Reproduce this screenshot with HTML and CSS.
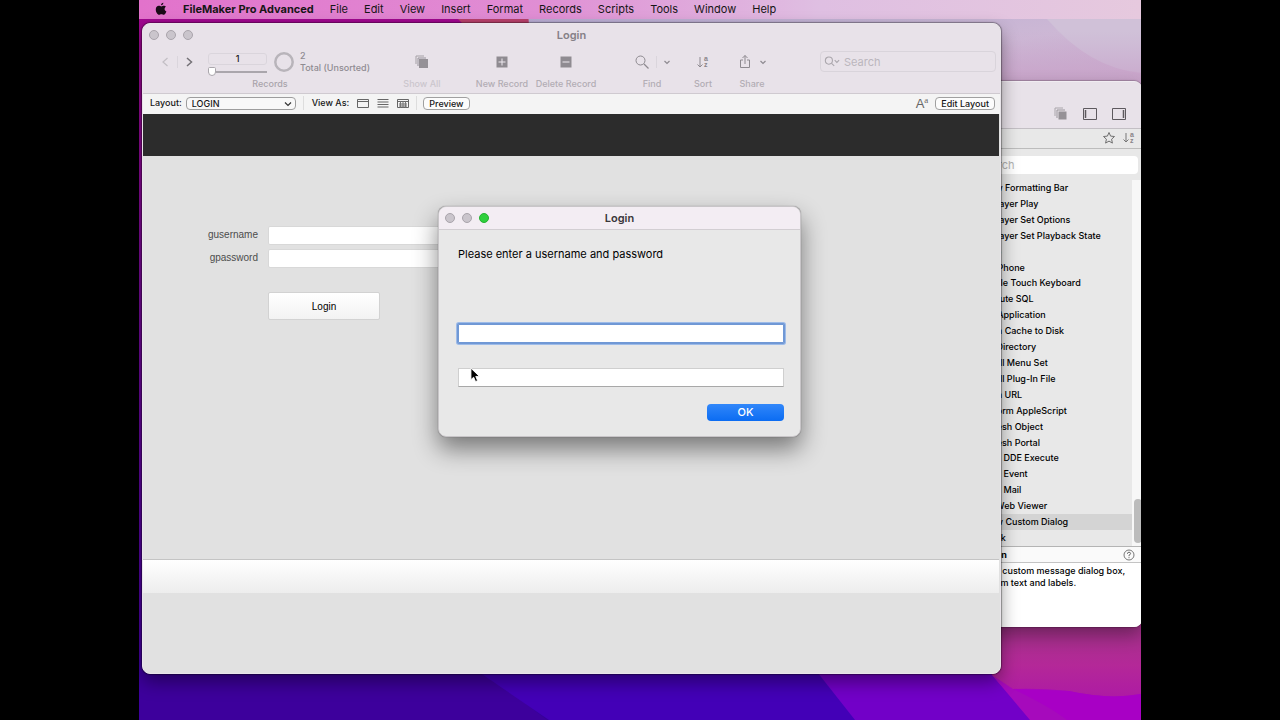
FILE: index.html
```html
<!DOCTYPE html>
<html lang="en">
<head>
<meta charset="utf-8">
<title>Login</title>
<link rel="stylesheet" href="styles.css">
</head>
<body>
<div class="desktop">
  <svg class="wallpaper" viewBox="0 0 1002 720" preserveAspectRatio="none" aria-hidden="true">
    <defs>
      <linearGradient id="left" x1="0" y1="0" x2="0" y2="1">
        <stop offset="0" stop-color="#a3078f"/><stop offset=".4" stop-color="#720a91"/><stop offset="1" stop-color="#3d009f"/>
      </linearGradient>
      <linearGradient id="sky" x1="0" y1="0" x2="1" y2="1">
        <stop offset="0" stop-color="#b3a9d2"/><stop offset=".6" stop-color="#cdb8d5"/><stop offset="1" stop-color="#c9a0c6"/>
      </linearGradient>
      <linearGradient id="rose" x1="0" y1="0" x2="0" y2="1">
        <stop offset="0" stop-color="#9f3486"/><stop offset=".45" stop-color="#b42898"/><stop offset="1" stop-color="#a911ac"/>
      </linearGradient>
      <linearGradient id="haze" x1="0" y1="0" x2="0" y2="1">
        <stop offset="0" stop-color="#c9acd0" stop-opacity="0"/><stop offset="1" stop-color="#c8a2c8"/>
      </linearGradient>
    </defs>
    <rect width="1002" height="720" fill="url(#left)"/>
    <path d="M300 0H390L396 30H330Z" fill="#b8406b"/>
    <path d="M388 0H1002V100H396Z" fill="url(#sky)"/>
    <path d="M908 19H1002V73Q950 68 908 19Z" fill="#d0c1d8"/>
    <path d="M862 30H1002V90H862Z" fill="url(#haze)"/>
    <rect x="250" y="660" width="250" height="60" fill="#36009a"/>
    <path d="M0 660H330L408 720H0Z" fill="#3d009c"/>
    <path d="M334 668L410 720H760L680 660Z" fill="#4300b7"/>
    <path d="M675 668L716 720H900L850 660Z" fill="#7200c8"/>
    <path d="M850 620H1002V720H894L853 675Z" fill="url(#rose)"/>
    <path d="M853 675L891 720H1002V694Q970 700 930 691Q900 688 874 689Z" fill="#a60abc"/>
    <path d="M874 689Q910 706 928 720H1002V694Q970 700 930 691Z" fill="#a800c5"/>
  </svg>

  <nav class="menubar" aria-label="Application menu">
    <svg class="apple" viewBox="0 0 14 16"><path d="M9.8.7C9.9 2 8.700 3.600 7.100 3.600 6.900 2.200 8.300.8 9.800.7ZM12.700 5.400c-2.300 1.500-1.800 4.500.6 5.500-.6 1.700-1.800 3.800-3.100 3.800-1.100 0-1.400-.7-2.700-.7s-1.700.7-2.700.7C2.800 14.700.9 11.400.9 8.500.9 5.700 2.600 4.200 4.400 4.200c1.200 0 2.200.8 3 .8.700 0 1.900-.9 3.300-.8.800 0 1.600.4 2 1.200Z"/></svg>
    <strong class="app-name">FileMaker Pro Advanced</strong>
    <button class="menu">File</button><button class="menu">Edit</button><button class="menu">View</button><button class="menu">Insert</button><button class="menu">Format</button><button class="menu">Records</button><button class="menu">Scripts</button><button class="menu">Tools</button><button class="menu">Window</button><button class="menu">Help</button>
  </nav>

  <section class="window script-window" aria-label="Script steps">
    <div class="script-tools">
      <svg class="icon" viewBox="0 0 16 16"><path d="M2 10V2H10" fill="none" stroke="#aaa6ab"/><path d="M4 12V4H12" fill="none" stroke="#99959a"/><path d="M5.500 5.500h8v8h-8z" fill="#969297"/></svg>
      <svg class="icon" viewBox="0 0 16 16"><path d="M1.500 2.500h13v11h-13z" fill="none" stroke="#5d595e"/><path d="M3.500 4v8" stroke="#5d595e" stroke-width="1.500"/></svg>
      <svg class="icon" viewBox="0 0 16 16"><path d="M1.500 2.500h13v11h-13z" fill="none" stroke="#5d595e"/><path d="M12.500 4v8" stroke="#5d595e" stroke-width="1.500"/></svg>
    </div>
    <div class="step-sort">
      <svg class="small-icon" viewBox="0 0 14 14"><path d="M7 1.500l1.600 3.600 3.900.4-2.900 2.700.8 3.900L7 10.100l-3.400 2 .8-3.900L1.500 5.500l3.900-.4Z" fill="none" stroke="#6e6e6e"/></svg>
      <svg class="small-icon sort-letters" viewBox="0 0 14 14"><path d="M4 2v9M1.500 8.500L4 11l2.500-2.500" fill="none" stroke="#777"/><text x="8" y="6">a</text><text x="8" y="12">z</text></svg>
    </div>
    <div class="step-search"><input type="search" placeholder="Search" aria-label="Search steps"></div>
    <div class="step-area">
      <ul class="steps">
        <li>Allow Formatting Bar</li><li>AVPlayer Play</li><li>AVPlayer Set Options</li><li>AVPlayer Set Playback State</li><li>Beep</li><li>Dial Phone</li><li>Enable Touch Keyboard</li><li>Execute SQL</li><li>Exit Application</li><li>Flush Cache to Disk</li><li>Get Directory</li><li>Install Menu Set</li><li>Install Plug-In File</li><li>Open URL</li><li>Perform AppleScript</li><li>Refresh Object</li><li>Refresh Portal</li><li>Send DDE Execute</li><li>Send Event</li><li>Send Mail</li><li>Set Web Viewer</li><li class="selected">Show Custom Dialog</li><li>Speak</li>
      </ul>
      <div class="scroll"><div class="thumb"></div></div>
    </div>
    <div class="description-head"><strong>Description</strong><svg class="help" viewBox="0 0 12 12"><circle cx="6" cy="6" r="5" fill="none" stroke="#777"/><path d="M4.400 4.800Q4.500 3.200 6 3.200T7.600 4.600Q7.600 5.500 6 6.200V7.200M6 8.200V9.200" fill="none" stroke="#666"/></svg></div>
    <p class="description">Displays a custom message dialog box,<br>with custom text and labels.</p>
  </section>

  <main class="window main-window">
    <header class="titlebar">
      <div class="lights"><i></i><i></i><i></i></div>
      <h1 class="title">Login</h1>
    </header>
    <div class="toolbar">
      <div class="records">
        <div class="record-row">
          <button class="nav" aria-label="Previous record"><svg viewBox="0 0 10 12"><path d="M7.500 2L3 6l4.500 4" fill="none" stroke="#c2bec4" stroke-width="1.200"/></svg></button>
          <span class="rule"></span>
          <button class="nav" aria-label="Next record"><svg viewBox="0 0 10 12"><path d="M3 2l4.500 4L3 10" fill="none" stroke="#747176" stroke-width="1.500"/></svg></button>
          <div class="pager">
            <input class="page-number" value="1" aria-label="Current record">
            <input class="slider" type="range" min="1" max="2" value="1" aria-label="Record slider">
          </div>
          <svg class="ring" viewBox="0 0 22 22"><circle cx="11" cy="11" r="8.700" fill="none" stroke="#b8b4ba" stroke-width="2.500"/></svg>
          <div class="count">2<br>Total (Unsorted)</div>
        </div>
        <span class="caption">Records</span>
      </div>
      <button class="tool show-all"><span class="glyph"><svg class="icon" viewBox="0 0 16 16"><path d="M2 10V2H10" fill="none" stroke="#a5a1a6"/><path d="M4 12V4H12" fill="none" stroke="#96929a"/><path d="M5 5h9v9H5z" fill="#959197"/></svg></span><span class="caption">Show All</span></button>
      <button class="tool new"><span class="glyph"><svg class="icon" viewBox="0 0 16 16"><path d="M2.500 2.500h11v11h-11z" fill="#8f8b91"/><path d="M8 4.500v7M4.500 8h7" stroke="#eee9ef"/></svg></span><span class="caption">New Record</span></button>
      <button class="tool delete"><span class="glyph"><svg class="icon" viewBox="0 0 16 16"><path d="M2.500 2.500h11v11h-11z" fill="#8f8b91"/><path d="M4.500 8h7" stroke="#eee9ef"/></svg></span><span class="caption">Delete Record</span></button>
      <button class="tool find"><span class="glyph"><svg class="icon" viewBox="0 0 16 16"><circle cx="6.500" cy="6.500" r="4.500" fill="none" stroke="#8e8a90"/><path d="M10 10l4.500 4.500" stroke="#8e8a90" stroke-width="1.200"/></svg><span class="rule"></span><svg class="arrow" viewBox="0 0 8 8"><path d="M1.500 3L4 5.500 6.500 3" fill="none" stroke="#8e8a90" stroke-width="1.200"/></svg></span><span class="caption">Find</span></button>
      <button class="tool sort"><span class="glyph"><svg class="small-icon sort-letters" viewBox="0 0 14 14"><path d="M4 2v10M1.500 9.500L4 12l2.500-2.500" fill="none" stroke="#8e8a90"/><text x="8" y="6">a</text><text x="8" y="12">z</text></svg></span><span class="caption">Sort</span></button>
      <button class="tool share"><span class="glyph"><svg class="icon" viewBox="0 0 16 16"><path d="M6 6H3.500v7.500h9V6H10M8 10V1.500M5.500 4L8 1.500 10.500 4" fill="none" stroke="#8e8a90"/></svg><svg class="arrow" viewBox="0 0 8 8"><path d="M1.500 3L4 5.500 6.500 3" fill="none" stroke="#8e8a90" stroke-width="1.200"/></svg></span><span class="caption">Share</span></button>
      <label class="quick-search"><svg viewBox="0 0 18 12"><circle cx="5.500" cy="5" r="4" fill="none" stroke="#aaa6ac" stroke-width="1.200"/><path d="M8.500 8l3 3M12 4.500L14.500 7 17 4.500" fill="none" stroke="#aaa6ac" stroke-width="1.200"/></svg><input type="search" placeholder="Search" aria-label="Quick find"></label>
    </div>
    <div class="layoutbar">
      <label for="layout">Layout:</label>
      <div class="select-wrap"><select id="layout"><option>LOGIN</option></select><svg class="arrow" viewBox="0 0 8 8"><path d="M1 2.500l3 3 3-3" fill="none" stroke="#333" stroke-width="1.200"/></svg></div>
      <span class="bar-rule"></span>
      <span class="view-label">View As:</span>
      <button class="view" aria-label="Form view"><svg viewBox="0 0 12 12"><path d="M.5 2.500h11v8H.5zM.5 4.500h11" fill="none" stroke="#666"/></svg></button>
      <button class="view" aria-label="List view"><svg viewBox="0 0 12 12"><path d="M.5 2.500h11M.5 5h11M.5 7.500h11M.5 10h11" stroke="#666"/></svg></button>
      <button class="view" aria-label="Table view"><svg viewBox="0 0 12 12"><path d="M.5 2.500h11v8H.5zM.5 4.500h11M2 7h8M2 9h8" fill="none" stroke="#666"/><path d="M3.500 4.500v6M6 4.500v6M8.500 4.500v6" stroke="#777"/></svg></button>
      <span class="bar-rule view-rule"></span>
      <button class="pill">Preview</button>
      <button class="format" aria-label="Formatting bar">A<sup>a</sup></button>
      <button class="pill">Edit Layout</button>
    </div>
    <div class="canvas">
      <div class="band"></div>
      <form class="form">
        <label for="user">gusername</label><input id="user" type="text">
        <label for="pass">gpassword</label><input id="pass" type="text">
        <button type="button" class="login">Login</button>
      </form>
      <div class="footer-band"></div>
      <div class="below"></div>
    </div>
  </main>

  <section class="window dialog" role="dialog" aria-labelledby="dialog-title">
    <header class="titlebar">
      <div class="lights"><i></i><i></i><i class="green"></i></div>
      <h2 class="title" id="dialog-title">Login</h2>
    </header>
    <form class="dialog-body">
      <p>Please enter a username and password</p>
      <input class="focused" type="text" aria-label="Username">
      <input type="password" aria-label="Password">
      <button type="button" class="ok">OK</button>
    </form>
    <svg class="cursor" viewBox="0 0 12 18"><path d="M1 1v12.500l3-2.600 2 4.700 2.300-1-2-4.600h4Z" fill="#000" stroke="#fff" stroke-width="1"/></svg>
  </section>
</div>
</body>
</html>
```
FILE: styles.css
```css
* { box-sizing: border-box; }
body { margin: 0; padding: 0 139px; background: #000; font: 500 9px/14px Inter, "Liberation Sans", sans-serif; color: #161616; }
button, input, select { font: inherit; color: inherit; margin: 0; padding: 0; border: 0; background: none; border-radius: 0; outline: 0; }
input { min-width: 0; }
h1, h2, p, ul { margin: 0; padding: 0; }
svg { display: block; flex: none; }

.desktop { position: relative; height: 100vh; min-height: 700px; overflow: hidden; }
.wallpaper { position: absolute; inset: 0; width: 100%; height: 100%; }
.menubar { position: relative; display: flex; align-items: center; gap: 16px; height: 19px; padding: 0 0 2px 16px; font-size: 11px; font-weight: 400; white-space: nowrap; background: linear-gradient(90deg, #e272cb, #e08ed4 40%, #dfbfe2 68%, #e6c9de); }
.apple { width: 12px; height: 14px; fill: #1a0a18; }
.app-name { font-weight: 700; }

.window { position: absolute; display: flex; flex-direction: column; overflow: hidden; border-radius: 8px; }
.titlebar { display: grid; grid-template-columns: 1fr auto 1fr; align-items: center; }
.lights { display: flex; gap: 7px; padding-left: 6px; }
.lights i { width: 10px; height: 10px; border: 1px solid #a9a4ab; border-radius: 50%; background: #cac5cc; }
.lights .green { background: #2fd03d; border-color: #25b232; }
.title { font-size: 11px; line-height: 14px; font-weight: 600; }
.icon { width: 16px; height: 16px; }
.small-icon { width: 14px; height: 14px; }
.sort-letters text { font: 700 7px "Liberation Sans", sans-serif; fill: #88848a; }
.arrow { width: 8px; height: 8px; }
.rule { width: 1px; height: 12px; background: #dad5dc; }

.main-window { inset: 23px 140px 46px 3px; background: #e1e1e1; border: 1px solid #e9e5ea; box-shadow: 0 0 1px 1px #0005, 0 8px 18px #0006; }
.main-window .titlebar { height: 22px; background: #e8e2e9; color: #858087; }
.toolbar { display: flex; align-items: flex-start; height: 48px; padding: 0 4px 0 14px; background: #e8e2e9; border-bottom: 1px solid #cfcad0; color: #b2adb4; }
.records { display: flex; flex-direction: column; align-items: center; width: 226px; margin-right: 9px; }
.record-row { display: flex; align-items: center; align-self: stretch; height: 31px; }
.records .caption { color: #a9a4ab; }
.nav { width: 17px; padding-left: 3px; }
.nav + .rule { margin: 0 3px; }
.nav svg { width: 10px; height: 12px; }
.pager { display: flex; flex-direction: column; width: 59px; margin: 6px 6px 0 10px; }
.page-number { width: 100%; height: 12px; border: 1px solid #dad5dc; border-radius: 3px; text-align: center; color: #222; }
.slider { appearance: none; width: 100%; height: 12px; background: linear-gradient(#aaa6ac, #aaa6ac) 0 6px / 100% 2px no-repeat; }
.slider::-webkit-slider-thumb { appearance: none; width: 8px; height: 9px; margin-top: 2px; background: #fff; border: 1px solid #aaa6ac; border-radius: 2px 2px 5px 5px; }
.ring { width: 22px; height: 22px; }
.count { margin-left: 5px; line-height: 12px; color: #8f8b91; white-space: nowrap; }
.tool { display: flex; flex-direction: column; align-items: center; width: 44px; white-space: nowrap; }
.glyph { display: flex; align-items: center; justify-content: center; height: 31px; gap: 6px; }
.show-all { width: 60px; margin-right: 20px; color: #cbc6cd; }
.new { width: 60px; }
.delete { width: 68px; margin-right: 30px; }
.find { width: 44px; margin-right: 7px; }
.sort { margin-right: 5px; }
.quick-search { display: flex; align-items: center; gap: 4px; width: 176px; height: 21px; margin: 5px 0 0 auto; padding-left: 3px; border: 1px solid #d9d4db; border-radius: 4px; font-size: 11px; font-weight: 400; }
.quick-search svg { width: 16px; height: 11px; }
.quick-search input { flex: 1; }
.quick-search input::placeholder { color: #bbb6bd; }

.layoutbar { display: flex; align-items: center; height: 20px; padding: 0 5px 2px 7px; background: #f4f4f4; white-space: nowrap; }
.select-wrap { position: relative; width: 110px; margin-left: 4px; }
.select-wrap select { display: block; appearance: none; width: 100%; height: 13px; padding-left: 5px; border: 1px solid #9d9d9d; border-radius: 4px; background: #f8f8f8; line-height: 11px; }
.select-wrap .arrow { position: absolute; right: 4px; top: 3px; pointer-events: none; }
.bar-rule { width: 1px; height: 14px; margin: 0 8px 0 7px; background: #ddd; }
.view { width: 12px; margin-left: 8px; }
.view svg { width: 12px; height: 12px; }
.view-rule { margin: 0 6px 0 7px; }
.pill { height: 13px; padding: 0 5px; border: 1px solid #a0a0a0; border-radius: 4px; background: #fcfcfc; line-height: 11px; }
.format { margin: 0 7px 0 auto; font: 13px/14px "Liberation Sans", sans-serif; color: #666; }
.format sup { font: 9px/8px "Liberation Serif", serif; vertical-align: 5px; }

.canvas { flex: 1; display: flex; flex-direction: column; padding-right: 1px; }
.band { height: 42px; background: #2c2c2c; }
.form { flex: 1; display: grid; grid-template-columns: 115px 280px; column-gap: 10px; row-gap: 4px; align-content: start; padding-top: 70px; font: 10px/13px "Liberation Sans", sans-serif; color: #4c4c4c; }
.form label { text-align: right; line-height: 18px; }
.form input { height: 19px; background: #fff; border: 1px solid #d8d8d8; border-radius: 2px; }
.login { grid-column: 2; width: 112px; height: 28px; margin-top: 20px; color: #000; background: linear-gradient(#fff, #f2f2f2); border: 1px solid #d2d2d2; border-radius: 2px; }
.footer-band { height: 34px; border-top: 1px solid #c4c4c4; background: linear-gradient(#fff, #ededed); }
.below { height: 80px; }

.script-window { top: 81px; right: -1px; width: 200px; height: 546px; background: #e8e8e8; border-top: 1px solid #f1edf2; box-shadow: 0 0 1px 1px #0003, 0 8px 18px #0005; color: #000; }
.script-tools { display: flex; justify-content: flex-end; gap: 13px; height: 47px; padding: 24px 15px 0 0; background: #e8e2e9; border-bottom: 1px solid #c3bfc4; }
.step-sort { display: flex; justify-content: flex-end; align-items: center; gap: 6px; height: 20px; padding: 0 6px 2px 0; border-bottom: 1px solid #bcbcbc; }
.step-search { padding: 7px 4px 0 8px; }
.step-search input { display: block; width: 100%; height: 18px; padding-left: 28px; background: #fff; border-radius: 4px; font-size: 11px; font-weight: 400; }
.step-search input::placeholder { color: #b2b2b2; }
.step-area { display: flex; flex: 1; padding-top: 6px; min-height: 0; overflow: hidden; }
.steps { flex: 1; display: flex; flex-direction: column; list-style: none; }
.steps li { flex: 1; min-height: 0; padding-left: 37px; line-height: 16px; white-space: nowrap; }
.selected { background: #d4d4d4; }
.scroll { display: flex; align-items: flex-end; justify-content: flex-end; width: 10px; padding-bottom: 3px; background: #f7f7f7; }
.thumb { width: 8px; height: 44px; border-radius: 4px; background: #bcbcbc; }
.description-head { display: flex; justify-content: space-between; align-items: center; height: 17px; padding: 0 7px 0 14px; background: #fafafa; border-top: 1px solid #b4b4b4; border-bottom: 1px solid #c4c4c4; }
.help { width: 12px; height: 12px; }
.description { height: 64px; padding: 2px 0 0 14px; background: #fff; line-height: 12px; white-space: nowrap; }

.dialog { left: 299px; top: 206px; width: 363px; height: 231px; overflow: visible; background: #e8e8e8; border: 1px solid #c8c5c8; box-shadow: 0 0 1px #0007, 0 12px 24px #0007; }
.dialog .titlebar { height: 23px; padding-bottom: 1px; background: #f3edf3; border-bottom: 1px solid #d2ced2; border-radius: 8px 8px 0 0; color: #39363a; }
.dialog-body { display: flex; flex-direction: column; align-items: stretch; padding: 17px 16px 0 19px; font-size: 11px; font-weight: 400; color: #000; }
.dialog-body input { height: 19px; background: #fff; border: 1px solid #cfcfcf; border-bottom-color: #a8a8a8; }
.dialog-body .focused { margin: 63px 0 25px; border: 1px solid #7098d5; box-shadow: 0 0 0 1px #7098d5, 0 0 0 2px #9dbbe8; border-radius: 1px; }
.dialog-body .ok { align-self: flex-end; width: 77px; height: 17px; margin-top: 17px; padding-bottom: 1px; color: #fff; font-weight: 500; background: linear-gradient(#3187fa, #0b6cf2); border-radius: 4px; }
.cursor { position: absolute; left: 31px; top: 160px; width: 11px; height: 17px; }
```
